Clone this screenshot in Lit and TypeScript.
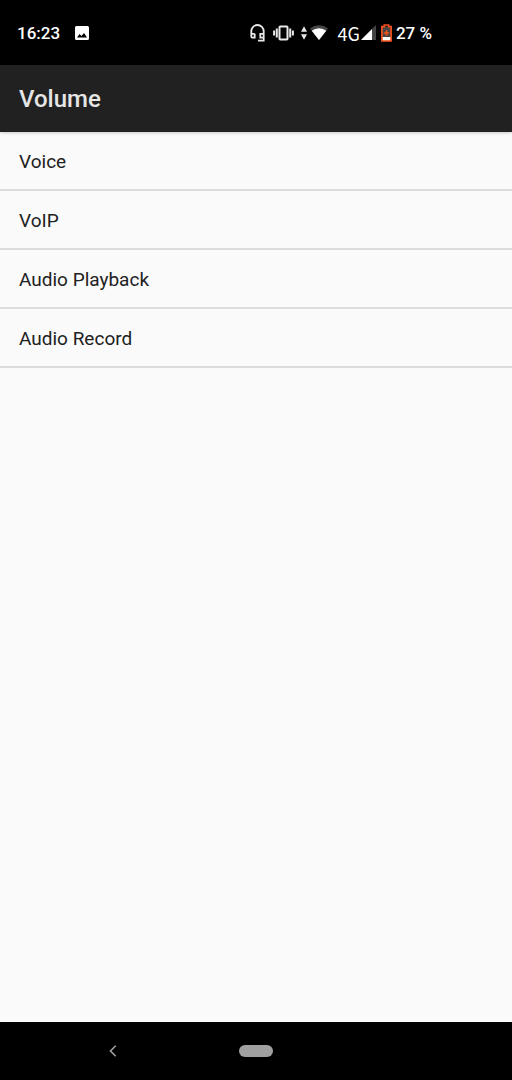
import { LitElement, html, css } from "lit";
import { customElement } from "lit/decorators.js";

@customElement("app-root")
export class AppRoot extends LitElement {
  static styles = css`
    :host { display: flex; flex-direction: column; min-height: 100vh; background: #fafafa; color: #212121; font-family: Roboto, sans-serif; }
    .status { display: flex; align-items: center; height: 65px; box-sizing: border-box; padding: 0 80px 0 17px; background: #000; color: #fff; font-size: 17px; font-weight: 500; line-height: 20px; }
    .status svg { display: block; flex: none; }
    .picture { margin-left: 15px; }
    .right { display: flex; align-items: center; margin-left: auto; }
    .net { font-family: "Noto Sans CJK SC", sans-serif; font-weight: 400; font-size: 18px; margin-left: 10px; }
    .vibrate { margin-left: 8px; }
    .traffic { margin-left: 7px; }
    .wifi { margin-left: 3px; }
    .signal { margin-left: 1px; }
    .battery { margin: 0 4px 0 5px; }
    .bar { background: #212121; color: #e6e6e6; height: 67px; display: flex; align-items: center; padding: 0 19px; box-shadow: 0 1px 3px rgba(0, 0, 0, 0.2); }
    h1 { margin: 0; font-size: 24px; line-height: 28px; font-weight: 500; }
    main { flex: 1; }
    ul { list-style: none; margin: 0; padding: 0; }
    li { border-bottom: 2px solid #dcdcdc; }
    .row { display: block; width: 100%; border: 0; background: none; text-align: left; font: 400 19px/25px Roboto, sans-serif; color: #212121; padding: 17px 19px 15px; }
    .nav { display: grid; grid-template-columns: 1fr 60px 1fr; align-items: center; height: 58px; background: #000; }
    .nav button { border: 0; background: none; padding: 0; display: grid; place-items: center; }
    .pill { width: 34px; height: 12px; border-radius: 6px; background: #a0a0a0; }
  `;

  private items = ["Voice", "VoIP", "Audio Playback", "Audio Record"];

  render() {
    return html`
      <header class="status">
        <span>16:23</span>
        <svg class="picture" width="14" height="14" viewBox="0 0 14 14"><path fill="#fff" fill-rule="evenodd" d="M1.500 0h11A1.500 1.500 0 0 1 14 1.500v11a1.500 1.500 0 0 1-1.500 1.500h-11A1.500 1.500 0 0 1 0 12.500v-11A1.500 1.500 0 0 1 1.500 0zM2 11.500h10L9 7l-2.500 3-2-2z"/></svg>
        <div class="right">
          <svg width="15" height="18" viewBox="0 0 15 18" fill="none" stroke="#e8e8e8" stroke-width="1.800"><path d="M4.700 9.800H1.300V7.200a6.200 6.200 0 0 1 12.400 0v9.400H8M1.300 9v3.600q0 1 1 1h2.400V9.800M13.700 9.800h-3.400v3.800h3.400"/></svg>
          <svg class="vibrate" width="21" height="16" viewBox="0 0 21 16" fill="none" stroke="#e8e8e8" stroke-width="2"><rect x="6.500" y="1.500" width="8" height="13" rx=".8"/><path d="M3.800 3.500v9M17.200 3.500v9M1.100 5.500v5M19.900 5.500v5"/></svg>
          <svg class="traffic" width="6" height="14" viewBox="0 0 6 14" fill="#e8e8e8"><path d="M3 .2 6 5.700H0zM3 13.800 0 8.300h6z"/></svg>
          <svg class="wifi" width="18" height="15" viewBox="0 0 18 15"><path fill="#444" d="M9 15 0 3.500a14.500 14.500 0 0 1 18 0z"/><path fill="#fff" d="M9 15 1.700 5.700a11.800 11.800 0 0 1 14.600 0z"/></svg>
          <span class="net">4G</span>
          <svg class="signal" width="15" height="15" viewBox="0 0 15 15"><path fill="#444" d="M15 0v15H0z"/><path fill="#fff" d="M11 4v11H0z"/></svg>
          <svg class="battery" width="11" height="18" viewBox="0 0 11 18"><path fill="#444" d="M1 2.500h9V17H1z"/><path fill="#fff" d="M1 13h9v4H1z"/><path fill="none" stroke="#f4511e" stroke-width="1.700" d="M3.300 2.700V1h4.400v1.700h2.400v14.300H.9V2.700zM5.500 6.200v5.600M2.700 9h5.600"/></svg>
          <span>27 %</span>
        </div>
      </header>
      <div class="bar"><h1>Volume</h1></div>
      <main><ul>${this.items.map((i) => html`<li><button class="row">${i}</button></li>`)}</ul></main>
      <nav class="nav">
        <button aria-label="Back"><svg width="8" height="12" viewBox="0 0 8 12" fill="none" stroke="#a0a0a0" stroke-width="1.600"><path d="M6.700 .8 1.500 6l5.200 5.200"/></svg></button>
        <button aria-label="Home"><span class="pill"></span></button>
      </nav>
    `;
  }
}
